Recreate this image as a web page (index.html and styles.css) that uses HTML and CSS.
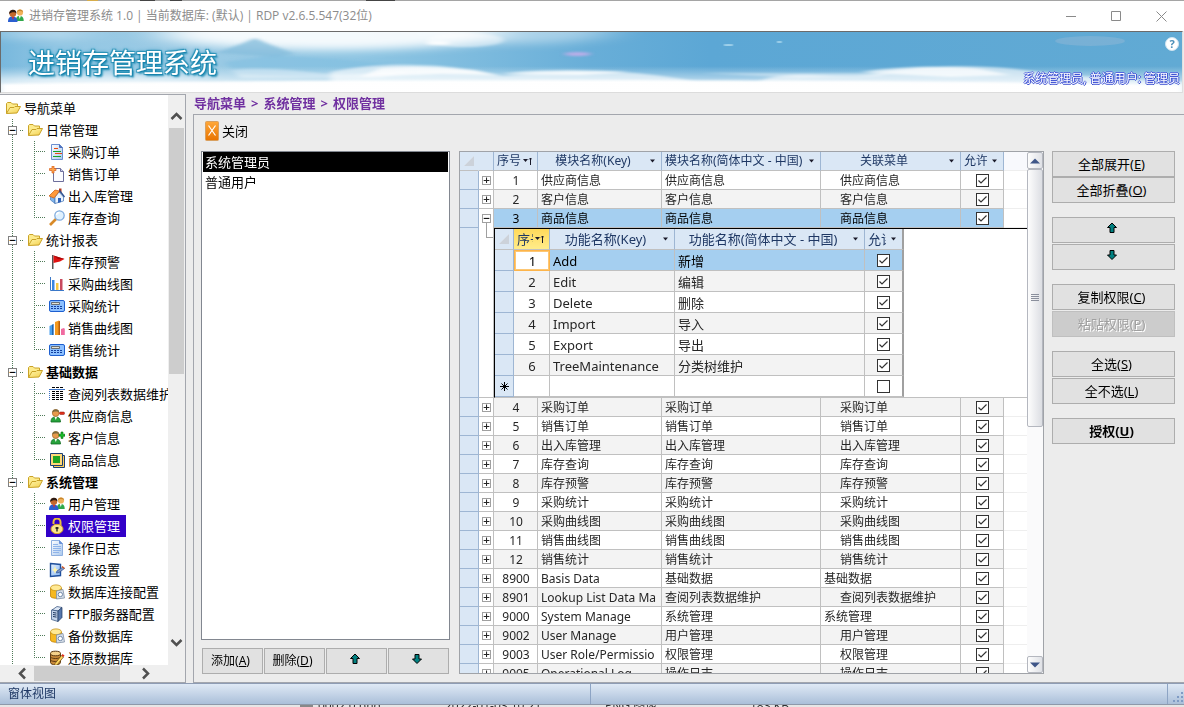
FILE: index.html
```html
<!DOCTYPE html>
<html lang="zh-CN">
<head>
<meta charset="utf-8">
<title>进销存管理系统</title>
<link rel="stylesheet" href="styles.css">
</head>
<body>
<svg class="defs" aria-hidden="true">
  <defs>
    <linearGradient id="gf" x1="0" y1="0" x2="1" y2="1"><stop offset="0" stop-color="#fff7b0"/><stop offset="1" stop-color="#f3cf4a"/></linearGradient>
    <linearGradient id="gb" x1="0" y1="0" x2="1" y2="1"><stop offset="0" stop-color="#e8f3ff"/><stop offset="1" stop-color="#7fb2f5"/></linearGradient>
    <linearGradient id="gd" x1="0" y1="0" x2="1" y2="1"><stop offset="0" stop-color="#ffffff"/><stop offset="1" stop-color="#a9c8ee"/></linearGradient>
    <linearGradient id="go" x1="0" y1="0" x2="0" y2="1"><stop offset="0" stop-color="#ffa83a"/><stop offset="1" stop-color="#e87400"/></linearGradient>
    <symbol id="folder" viewBox="0 0 16 16"><path d="M1.500 13.500V3.500l1-1h3.500l1.500 1.500h5v3" fill="#fdeb8c" stroke="#c9a227"/><path d="M1.500 13.500L5 7.500h4l1-1h5.500L12 13z" fill="url(#gf)" stroke="#c9a227"/></symbol>
    <symbol id="doc" viewBox="0 0 16 16"><path d="M2.500 .5h8l3 3v12h-11z" fill="url(#gd)" stroke="#6b8fd0"/><path d="M10.500 .5v3h3" fill="#5577c0" stroke="#4a6dbb"/><path d="M5 4.500h4M6 9.500h7" stroke="#e84a10"/><path d="M4 7.500h8M4 12.500h8" stroke="#19a02a"/></symbol>
    <symbol id="newdoc" viewBox="0 0 16 16"><path d="M4.500 2.500h7l3 3v10h-10z" fill="#fbfbff" stroke="#6d6f9c"/><path d="M11.500 2.500v3h3" fill="#c8cdea" stroke="#6d6f9c"/><path d="M3 0h2v2.500h2v2H5V7H3V4.500H.5v-2H3z" fill="#ffa64a" stroke="#d9601c" stroke-width=".7"/></symbol>
    <symbol id="house" viewBox="0 0 16 16"><path d="M10 .5h2.500v4H10z" fill="#b53a1e"/><path d="M1.500 7L6 11v4.500L1.500 12z" fill="#7fb4ec" stroke="#3d6fb0" stroke-width=".6"/><path d="M6 9l4-5 4.500 5v4L6 15.500z" fill="#eaf4ff" stroke="#3d6fb0" stroke-width=".7"/><path d="M0 8l6-6 4.500 1L5 10z" fill="#ff9a3c" stroke="#c85a10" stroke-width=".7"/><path d="M10.500 2.500L15.500 9" stroke="#2a4f90" stroke-width="1.300" fill="none"/><path d="M9 10h3v4l-3 1z" fill="#2f62b8"/></symbol>
    <symbol id="mag" viewBox="0 0 16 16"><path d="M1 15l6-6" stroke="#d88a28" stroke-width="2.600"/><circle cx="10.500" cy="5.500" r="4.700" fill="#dff1ff" stroke="#7da9dc" stroke-width="1.200"/><path d="M7.500 5a3 3 0 0 1 3-2.500" stroke="#fff" stroke-width="1.400" fill="none"/></symbol>
    <symbol id="flag" viewBox="0 0 16 16"><path d="M3 1h1.500v14H3z" fill="#555"/><path d="M4.500 1.500L15.500 5 11 7.500 4.500 9z" fill="#e01212"/><path d="M4.500 1.500L15.500 5H9z" fill="#a80808"/></symbol>
    <symbol id="bars" viewBox="0 0 16 16"><path d="M1.500 1v13.500H15" stroke="#3b78c8" fill="none"/><path d="M3 4h3v10H3z" fill="#3a86e0"/><path d="M7 7h3v7H7z" fill="#f5c842"/><path d="M11 3h3v11h-3z" fill="#c84a5e"/><path d="M5 4h1v10H5zM9 7h1v7H9zM13 3h1v11h-1z" fill="#fff" opacity=".5"/></symbol>
    <symbol id="calc" viewBox="0 0 16 16"><rect x=".5" y="2.500" width="15" height="11" rx="1.500" fill="#8cc0ff" stroke="#1d5fd0"/><path d="M2.500 4.500h8v2h-8z" fill="#e4e4d4" stroke="#555" stroke-width=".8"/><path d="M2 8.500h12M2 10.500h12" stroke="#123f9e" stroke-dasharray="2 1"/></symbol>
    <symbol id="chart" viewBox="0 0 16 16"><path d="M.5 6l4-2v11h-4z" fill="#4aa0ee"/><path d="M3 5l1.500-1v11H3z" fill="#2365ad"/><path d="M6 2l4-1.500 1 1V15H6z" fill="#f59a1e"/><path d="M9.500 1.500L11 1v14H9.500z" fill="#b85e0a"/><path d="M12 9l3-1 .8 1v6H12z" fill="#f06aa0"/></symbol>
    <symbol id="list" viewBox="0 0 16 16"><path d="M0 3.500h16" stroke="#3b72c4"/><path d="M3 1.500h3M7 1.500h3M11 1.500h3M3 5.500h3M7 5.500h3M11 5.500h3M3 7.500h3M7 7.500h3M11 7.500h3M3 9.500h3M7 9.500h3M11 9.500h3M3 11.500h3M7 11.500h3M11 11.500h3M3 13.500h3M7 13.500h3M11 13.500h3" stroke="#000"/><path d="M.5 5v9" stroke="#3b72c4" stroke-dasharray="1 1"/></symbol>
    <symbol id="person" viewBox="0 0 16 16"><path d="M2 14c0-4 2-5 4.500-5s5 1 5 5z" fill="#27a23c" stroke="#0d6a20" stroke-width=".8"/><path d="M5.500 9h2.500L6.800 12z" fill="#fff"/><circle cx="6.700" cy="5" r="3.400" fill="#e69a4c" stroke="#a05c1c" stroke-width=".6"/><path d="M3.300 4.500C3 0 10.500 0 10 4.500 9 3 5 3 3.300 4.500z" fill="#7c6a3c"/></symbol>
    <symbol id="uminus" viewBox="0 0 16 16"><use href="#person"/><rect x="10.500" y="4" width="5" height="2.500" rx="1" fill="#e0301a" stroke="#8a1206" stroke-width=".5"/></symbol>
    <symbol id="uplus" viewBox="0 0 16 16"><use href="#person"/><path d="M12 2h2v2.200h2v2h-2v2.200h-2V6.200h-2v-2h2z" fill="#18c02a" stroke="#0b6a14" stroke-width=".6"/></symbol>
    <symbol id="goods" viewBox="0 0 16 16"><path d="M4.500 3.500h11v12h-11z" fill="#ffd05a" stroke="#1c3f74"/><path d="M1.500 1.500h12v12h-12z" fill="#ffd878" stroke="#1c3f74"/><path d="M4 4h7v7H4z" fill="#1fa51f"/></symbol>
    <symbol id="users" viewBox="0 0 16 16"><path d="M8 13c0-4 1-5 3.500-5s4.200 1 4.200 5z" fill="#2fa84a"/><circle cx="12" cy="4.500" r="3.100" fill="#f0b25a"/><path d="M8.900 4C9 .5 15 .5 15.100 4 13 2.500 11 2.500 8.900 4z" fill="#c8862c"/><path d="M10.800 8h2l-1 3z" fill="#fff"/><path d="M0 14c0-4 1.500-5.500 4.500-5.500S9.500 10 9.500 14z" fill="#2b5fd0"/><circle cx="4.800" cy="5.500" r="3.400" fill="#c4682c"/><path d="M1.200 6C.5 1 9 0 8.400 5.500 7 3.500 3 4 1.200 6z" fill="#2c1a12"/><path d="M4 9h2l-1 3z" fill="#e02a2a"/></symbol>
    <symbol id="lock" viewBox="0 0 16 16"><path d="M4.500 6V4a3.500 3.500 0 0 1 7 0v4" fill="none" stroke="#e8bf3c" stroke-width="2"/><ellipse cx="8" cy="11" rx="6" ry="4.700" fill="#fbe58c" stroke="#d8a624"/><path d="M6.500 10h3M8 9v4.500" stroke="#1a1a1a" stroke-width="1.300"/></symbol>
    <symbol id="log" viewBox="0 0 16 16"><path d="M2.500 .5h8l3 3v12h-11z" fill="url(#gd)" stroke="#8fb0e0"/><path d="M10.500 .5v3h3" fill="#6a92d8" stroke="#6a92d8"/><path d="M4 4.500h5M4 6.500h8M4 8.500h8M4 10.500h8M4 12.500h6" stroke="#8fb4ea"/></symbol>
    <symbol id="setup" viewBox="0 0 16 16"><path d="M1.500 1.500l10 1v11l-10 1z" fill="url(#gb)" stroke="#1f4f9c" stroke-width="1.400"/><path d="M6 4l1 3 3 1-3 1-1 3-1-3-2-1 2-1z" fill="#fff3a8"/><path d="M8 9l6-4 1.500 1.500L10 10.500l-2.500.5z" fill="#7d98c8" stroke="#2f4f8c" stroke-width=".7"/><path d="M13 4.500l2.500 2" stroke="#d85a20" stroke-width="1.500"/></symbol>
    <symbol id="db" viewBox="0 0 16 16"><path d="M1.500 4v8c0 3 11 3 11 0V4" fill="#f6b820" stroke="#c08208" stroke-width=".8"/><ellipse cx="7" cy="3.800" rx="5.500" ry="2.900" fill="#ffe994" stroke="#c89414" stroke-width=".8"/><path d="M7.500 7l6.500-1.500 1.500 8.500-8 1z" fill="#d8e0ea" stroke="#8090a6" stroke-width=".8"/><circle cx="11.300" cy="10.500" r="2.200" fill="#fff" stroke="#7088a8"/></symbol>
    <symbol id="server" viewBox="0 0 16 16"><path d="M3 4l5-3.500 5 1L9 5z" fill="#dce6f4" stroke="#2d4a78" stroke-width=".7"/><path d="M2.500 4L9 5v10.500L2.500 13.500z" fill="#c4d4ec" stroke="#2d4a78" stroke-width=".7"/><path d="M9 5l4-3.500v10L9 15.500z" fill="#5677ac" stroke="#1d365e" stroke-width=".7"/><path d="M4 6.500l3.500.6M4 8.500l3.500.6M4 10.500l3.500.6" stroke="#1d365e"/></symbol>
    <symbol id="dbpen" viewBox="0 0 16 16"><path d="M1.500 3.500v9c0 3 10 3 10 0v-9" fill="#c98a3a" stroke="#5c3810"/><ellipse cx="6.500" cy="3.500" rx="5" ry="2.300" fill="#f4d08a" stroke="#5c3810"/><path d="M1.500 7c1 2 9 2 10 0M1.500 10c1 2 9 2 10 0" fill="none" stroke="#5c3810"/><path d="M6 13.500l6.500-8 2 1.500-6.500 8-2.500.5z" fill="#ffd860" stroke="#6b4810" stroke-width=".7"/><path d="M12.500 5.500l2 1.500 1-1.500-2-1.500z" fill="#e02a1a"/></symbol>
    <symbol id="tri" viewBox="0 0 7 4"><path d="M1 .5h5L3.500 3.500z" fill="#1a1a2a"/></symbol>
    <symbol id="sort" viewBox="0 0 9 8"><path d="M0 2h5L2.500 5z" fill="#1a1a2a"/><path d="M7.500 8V1M6 2.500L7.500 1 9 2.500" stroke="#1a1a2a" fill="none"/></symbol>
    <symbol id="corner" viewBox="0 0 12 12"><path d="M11 1v10H1z" fill="#fff" opacity=".8"/><path d="M11 1L1 11h10z" fill="#b9c0ca" opacity=".7"/></symbol>
    <symbol id="up" viewBox="0 0 12 12"><path d="M6 1l4.500 4.500H8V10.500H4V5.500H1.500z" fill="#008080" stroke="#000"/></symbol>
    <symbol id="down" viewBox="0 0 12 12"><path d="M6 10.500L1.500 6H4V1.500h4V6h2.500z" fill="#008080" stroke="#000"/></symbol>
  </defs>
</svg>

<div class="window">
  <div class="desk-top"></div>
  <header class="titlebar">
    <svg class="ico"><use href="#users"/></svg>
    <span class="caption">进销存管理系统 1.0 | 当前数据库: (默认) | RDP v2.6.5.547(32位)</span>
    <div class="winbtns">
      <button aria-label="最小化"><svg width="11" height="11"><path d="M0 5.500h10" stroke="#8a8a8a"/></svg></button>
      <button aria-label="最大化"><svg width="11" height="11"><path d="M.5 .5h9v9h-9z" fill="none" stroke="#8a8a8a"/></svg></button>
      <button aria-label="关闭窗口"><svg width="11" height="11"><path d="M.5 .5l10 10M10.500 .5l-10 10" stroke="#8a8a8a"/></svg></button>
    </div>
  </header>

  <div class="banner">
    <svg class="sky" viewBox="0 0 1182 60" preserveAspectRatio="none" aria-hidden="true">
      <defs>
        <linearGradient id="s1"><stop offset="0" stop-color="#78b8dd"/><stop offset=".05" stop-color="#93c7e4"/><stop offset=".16" stop-color="#9ccbe5"/><stop offset=".3" stop-color="#8fc6e3"/><stop offset=".4" stop-color="#7dbbde"/><stop offset=".5" stop-color="#68aed8"/><stop offset=".6" stop-color="#5ca7d5"/><stop offset="1" stop-color="#61aad4"/></linearGradient>
        <linearGradient id="s2" x1="0" y1="0" x2="0" y2="1"><stop offset="0" stop-color="#fff" stop-opacity="0"/><stop offset=".7" stop-color="#fff" stop-opacity=".9"/><stop offset="1" stop-color="#fff"/></linearGradient>
        <filter id="b1" x="-50%" y="-100%" width="200%" height="300%"><feGaussianBlur stdDeviation="22 4"/></filter>
        <filter id="b2" x="-20%" y="-50%" width="140%" height="200%"><feGaussianBlur stdDeviation="3 1"/></filter>
      </defs>
      <path d="M0 0h1182v60H0z" fill="url(#s1)"/>
      <g filter="url(#b1)" fill="#fff">
        <ellipse cx="330" cy="2" rx="170" ry="16" opacity=".9"/>
        <ellipse cx="40" cy="2" rx="50" ry="5" opacity=".4"/>
        <ellipse cx="520" cy="0" rx="90" ry="12" opacity=".4"/>
        <ellipse cx="90" cy="50" rx="110" ry="5" opacity=".6"/>
      </g>
      <g filter="url(#b2)">
        <ellipse cx="465" cy="8" rx="38" ry="7" fill="#fff" opacity=".45"/>
        <ellipse cx="437" cy="11" rx="12" ry="2" fill="#fff" opacity=".8"/>
        <path d="M215 21L240 12l14-6 14 6 26 10-20 3z" fill="#86bddc" opacity=".8"/>
        <path d="M224 30l50-7 60 4 80 7v10l-90 3-90-5z" fill="#80bde0" opacity=".55"/>
        <path d="M230 38c40-4 70 2 100 4s60-4 80-2l-30 6H240z" fill="#fff" opacity=".35"/>
        <g fill="#fff">
          <path d="M330 40c30-6 60-8 85-7 25 0 40 3 60 5 14 3 20 6 30 6 40-4 80-5 130-3 30 3 60 8 80 11 20 1 30 1 40-1 14-8 40-9 60-8 20 1 50 2 70-3 50-7 90-7 130-3 50 6 100 11 170 13v12H330z" opacity=".6"/>
          <path d="M380 36c30-2 60-1 90 2l30 5-60-1-80 3zM500 42c40-5 90-4 130-2l-50 3z" opacity=".8"/>
          <path d="M860 40c50-7 90-6 120-3l30 6-60 2-60-3z" opacity=".75"/>
          <path d="M700 41h190l-10 3-80 2z" opacity=".4"/>
          <path d="M0 52c200-4 800-6 1182 1v10H0z"/>
        </g>
      </g>
      <ellipse cx="577" cy="22" rx="13" ry="2" fill="#b9aee8" filter="url(#b2)"/>
      <ellipse cx="1090" cy="9" rx="35" ry="5" fill="#9dbbd8" opacity=".4"/>
      <ellipse cx="728" cy="13" rx="5" ry="1" fill="#9fd0ea"/><ellipse cx="779" cy="10" rx="3" ry="1" fill="#9fd0ea"/>
      <path d="M0 34h1182v26H0z" fill="url(#s2)" opacity=".75"/>
    </svg>
    <div class="banner-text">
      <h1>进销存管理系统</h1>
      <div class="account">
        <button class="help" aria-label="帮助">?</button>
        <span class="who">系统管理员, 普通用户: 管理员</span>
      </div>
    </div>
  </div>

  <div class="work">
    <nav class="side" aria-label="导航菜单">
      <div class="side-main">
        <ul class="tree">
          <li class="row root"><svg class="ico"><use href="#folder"/></svg><a href="#">导航菜单</a></li>
          <li class="row group"><button class="box" aria-label="折叠 日常管理">−</button><i class="dash"></i><svg class="ico"><use href="#folder"/></svg><a href="#">日常管理</a></li>
          <li class="row leaf"><i class="branch"></i><a href="#"><svg class="ico"><use href="#doc"/></svg>采购订单</a></li>
          <li class="row leaf"><i class="branch"></i><a href="#"><svg class="ico"><use href="#newdoc"/></svg>销售订单</a></li>
          <li class="row leaf"><i class="branch"></i><a href="#"><svg class="ico"><use href="#house"/></svg>出入库管理</a></li>
          <li class="row leaf last"><i class="branch"></i><a href="#"><svg class="ico"><use href="#mag"/></svg>库存查询</a></li>
          <li class="row group"><button class="box" aria-label="折叠 统计报表">−</button><i class="dash"></i><svg class="ico"><use href="#folder"/></svg><a href="#">统计报表</a></li>
          <li class="row leaf"><i class="branch"></i><a href="#"><svg class="ico"><use href="#flag"/></svg>库存预警</a></li>
          <li class="row leaf"><i class="branch"></i><a href="#"><svg class="ico"><use href="#bars"/></svg>采购曲线图</a></li>
          <li class="row leaf"><i class="branch"></i><a href="#"><svg class="ico"><use href="#calc"/></svg>采购统计</a></li>
          <li class="row leaf"><i class="branch"></i><a href="#"><svg class="ico"><use href="#chart"/></svg>销售曲线图</a></li>
          <li class="row leaf last"><i class="branch"></i><a href="#"><svg class="ico"><use href="#calc"/></svg>销售统计</a></li>
          <li class="row group strong"><button class="box" aria-label="折叠 基础数据">−</button><i class="dash"></i><svg class="ico"><use href="#folder"/></svg><a href="#">基础数据</a></li>
          <li class="row leaf"><i class="branch"></i><a href="#"><svg class="ico"><use href="#list"/></svg>查阅列表数据维护</a></li>
          <li class="row leaf"><i class="branch"></i><a href="#"><svg class="ico"><use href="#uminus"/></svg>供应商信息</a></li>
          <li class="row leaf"><i class="branch"></i><a href="#"><svg class="ico"><use href="#uplus"/></svg>客户信息</a></li>
          <li class="row leaf last"><i class="branch"></i><a href="#"><svg class="ico"><use href="#goods"/></svg>商品信息</a></li>
          <li class="row group strong"><button class="box" aria-label="折叠 系统管理">−</button><i class="dash"></i><svg class="ico"><use href="#folder"/></svg><a href="#">系统管理</a></li>
          <li class="row leaf"><i class="branch"></i><a href="#"><svg class="ico"><use href="#users"/></svg>用户管理</a></li>
          <li class="row leaf"><i class="branch"></i><a href="#" class="current" aria-current="page"><svg class="ico"><use href="#lock"/></svg>权限管理</a></li>
          <li class="row leaf"><i class="branch"></i><a href="#"><svg class="ico"><use href="#log"/></svg>操作日志</a></li>
          <li class="row leaf"><i class="branch"></i><a href="#"><svg class="ico"><use href="#setup"/></svg>系统设置</a></li>
          <li class="row leaf"><i class="branch"></i><a href="#"><svg class="ico"><use href="#db"/></svg>数据库连接配置</a></li>
          <li class="row leaf"><i class="branch"></i><a href="#"><svg class="ico"><use href="#server"/></svg>FTP服务器配置</a></li>
          <li class="row leaf"><i class="branch"></i><a href="#"><svg class="ico"><use href="#db"/></svg>备份数据库</a></li>
          <li class="row leaf last"><i class="branch"></i><a href="#"><svg class="ico"><use href="#dbpen"/></svg>还原数据库</a></li>
        </ul>
        <div class="vbar">
          <svg width="13" height="9"><path d="M1.500 8l5-5 5 5" fill="none" stroke="#505050" stroke-width="2.500"/></svg>
          <div class="vtrack"><div class="vthumb"></div></div>
          <svg width="13" height="9"><path d="M1.500 1l5 5 5-5" fill="none" stroke="#505050" stroke-width="2.500"/></svg>
        </div>
      </div>
      <div class="hbar">
        <svg width="9" height="13"><path d="M8 1.500l-5 5 5 5" fill="none" stroke="#505050" stroke-width="2.500"/></svg>
        <div class="hthumb"></div>
        <svg width="9" height="13"><path d="M1 1.500l5 5-5 5" fill="none" stroke="#505050" stroke-width="2.500"/></svg>
      </div>
    </nav>

    <main class="content">
      <div class="crumbs"><span>导航菜单</span><span>&gt;</span><span>系统管理</span><span>&gt;</span><span>权限管理</span></div>
      <section class="panel">
        <div class="toolbar">
          <button class="close"><svg width="14" height="20"><rect x=".5" y=".5" width="13" height="19" rx="1" fill="url(#go)" stroke="#d8a060"/><path d="M3.500 4.500l7 10M10.500 4.500l-7 10" stroke="#fff" stroke-width="1.200"/></svg>关闭</button>
        </div>
        <div class="cols">
          <div class="roles">
            <ul class="rolelist" role="listbox" aria-label="角色">
              <li role="option" aria-selected="true">系统管理员</li>
              <li role="option" aria-selected="false">普通用户</li>
            </ul>
            <div class="rolebtns">
              <button class="btn">添加(<u>A</u>)</button>
              <button class="btn">删除(<u>D</u>)</button>
              <button class="btn" aria-label="上移角色"><svg class="arr"><use href="#up"/></svg></button>
              <button class="btn" aria-label="下移角色"><svg class="arr"><use href="#down"/></svg></button>
            </div>
          </div>

          <div class="grid">
            <div class="gridview">
              <table class="outer">
                <colgroup><col class="c-sel"><col class="c-exp"><col class="c-no"><col class="c-key"><col class="c-cn"><col class="c-menu"><col class="c-ok"><col></colgroup>
                <thead><tr>
                  <th class="nb"><svg class="corner"><use href="#corner"/></svg></th><th></th>
                  <th><div class="h left"><span>序号</span><svg class="sort"><use href="#sort"/></svg></div></th>
                  <th><div class="h"><span>模块名称(Key)</span><svg class="tri"><use href="#tri"/></svg></div></th>
                  <th><div class="h left"><span>模块名称(简体中文 - 中国)</span><svg class="tri"><use href="#tri"/></svg></div></th>
                  <th><div class="h"><span>关联菜单</span><svg class="tri"><use href="#tri"/></svg></div></th>
                  <th><div class="h left"><span>允许</span><svg class="tri"><use href="#tri"/></svg></div></th>
                  <th class="fill"></th>
                </tr></thead>
                <tbody>
                  <tr><td class="sel"></td><td><button class="box" aria-label="展开 1">+</button></td><td class="no">1</td><td>供应商信息</td><td>供应商信息</td><td class="in">供应商信息</td><td><input type="checkbox" checked aria-label="允许 1"></td><td class="fill"></td></tr>
                  <tr class="alt"><td class="sel"></td><td><button class="box" aria-label="展开 2">+</button></td><td class="no">2</td><td>客户信息</td><td>客户信息</td><td class="in">客户信息</td><td><input type="checkbox" checked aria-label="允许 2"></td><td class="fill"></td></tr>
                  <tr class="hot"><td class="sel"></td><td class="open"><button class="box" aria-label="折叠 3">−</button></td><td class="no">3</td><td>商品信息</td><td>商品信息</td><td class="in">商品信息</td><td><input type="checkbox" checked aria-label="允许 3"></td><td class="fill"></td></tr>
                  <tr class="nest"><td class="sel"></td><td><i class="elbow"></i></td><td colspan="6" class="subcell">
                    <table class="inner">
                      <colgroup><col class="i-sel"><col class="i-no"><col class="i-key"><col class="i-cn"><col class="i-ok"></colgroup>
                      <thead><tr>
                        <th><svg class="corner"><use href="#corner"/></svg></th>
                        <th class="gold"><div class="h left"><span>序号</span><svg class="sort"><use href="#sort"/></svg></div></th>
                        <th><div class="h"><span>功能名称(Key)</span><svg class="tri"><use href="#tri"/></svg></div></th>
                        <th><div class="h"><span>功能名称(简体中文 - 中国)</span><svg class="tri"><use href="#tri"/></svg></div></th>
                        <th><div class="h left"><span>允许</span><svg class="tri"><use href="#tri"/></svg></div></th>
                      </tr></thead>
                      <tbody>
                        <tr class="hot"><td class="sel"></td><td class="no edit">1</td><td>Add</td><td>新增</td><td><input type="checkbox" checked aria-label="允许 Add"></td></tr>
                        <tr class="alt"><td class="sel"></td><td class="no">2</td><td>Edit</td><td>编辑</td><td><input type="checkbox" checked aria-label="允许 Edit"></td></tr>
                        <tr><td class="sel"></td><td class="no">3</td><td>Delete</td><td>删除</td><td><input type="checkbox" checked aria-label="允许 Delete"></td></tr>
                        <tr class="alt"><td class="sel"></td><td class="no">4</td><td>Import</td><td>导入</td><td><input type="checkbox" checked aria-label="允许 Import"></td></tr>
                        <tr><td class="sel"></td><td class="no">5</td><td>Export</td><td>导出</td><td><input type="checkbox" checked aria-label="允许 Export"></td></tr>
                        <tr class="alt"><td class="sel"></td><td class="no">6</td><td>TreeMaintenance</td><td>分类树维护</td><td><input type="checkbox" checked aria-label="允许 TreeMaintenance"></td></tr>
                        <tr><td class="sel"><svg class="star" viewBox="0 0 9 9"><path d="M4.500 0v9M0 4.500h9M1.500 1.500l6 6M7.500 1.500l-6 6" stroke="#000"/></svg></td><td class="no"></td><td></td><td></td><td><input type="checkbox" aria-label="允许 新记录"></td></tr>
                      </tbody>
                    </table>
                  </td></tr>
                  <tr class="alt"><td class="sel"></td><td><button class="box" aria-label="展开 4">+</button></td><td class="no">4</td><td>采购订单</td><td>采购订单</td><td class="in">采购订单</td><td><input type="checkbox" checked aria-label="允许 4"></td><td class="fill"></td></tr>
                  <tr><td class="sel"></td><td><button class="box" aria-label="展开 5">+</button></td><td class="no">5</td><td>销售订单</td><td>销售订单</td><td class="in">销售订单</td><td><input type="checkbox" checked aria-label="允许 5"></td><td class="fill"></td></tr>
                  <tr class="alt"><td class="sel"></td><td><button class="box" aria-label="展开 6">+</button></td><td class="no">6</td><td>出入库管理</td><td>出入库管理</td><td class="in">出入库管理</td><td><input type="checkbox" checked aria-label="允许 6"></td><td class="fill"></td></tr>
                  <tr><td class="sel"></td><td><button class="box" aria-label="展开 7">+</button></td><td class="no">7</td><td>库存查询</td><td>库存查询</td><td class="in">库存查询</td><td><input type="checkbox" checked aria-label="允许 7"></td><td class="fill"></td></tr>
                  <tr class="alt"><td class="sel"></td><td><button class="box" aria-label="展开 8">+</button></td><td class="no">8</td><td>库存预警</td><td>库存预警</td><td class="in">库存预警</td><td><input type="checkbox" checked aria-label="允许 8"></td><td class="fill"></td></tr>
                  <tr><td class="sel"></td><td><button class="box" aria-label="展开 9">+</button></td><td class="no">9</td><td>采购统计</td><td>采购统计</td><td class="in">采购统计</td><td><input type="checkbox" checked aria-label="允许 9"></td><td class="fill"></td></tr>
                  <tr class="alt"><td class="sel"></td><td><button class="box" aria-label="展开 10">+</button></td><td class="no">10</td><td>采购曲线图</td><td>采购曲线图</td><td class="in">采购曲线图</td><td><input type="checkbox" checked aria-label="允许 10"></td><td class="fill"></td></tr>
                  <tr><td class="sel"></td><td><button class="box" aria-label="展开 11">+</button></td><td class="no">11</td><td>销售曲线图</td><td>销售曲线图</td><td class="in">销售曲线图</td><td><input type="checkbox" checked aria-label="允许 11"></td><td class="fill"></td></tr>
                  <tr class="alt"><td class="sel"></td><td><button class="box" aria-label="展开 12">+</button></td><td class="no">12</td><td>销售统计</td><td>销售统计</td><td class="in">销售统计</td><td><input type="checkbox" checked aria-label="允许 12"></td><td class="fill"></td></tr>
                  <tr><td class="sel"></td><td><button class="box" aria-label="展开 8900">+</button></td><td class="no">8900</td><td>Basis Data</td><td>基础数据</td><td>基础数据</td><td><input type="checkbox" checked aria-label="允许 8900"></td><td class="fill"></td></tr>
                  <tr class="alt"><td class="sel"></td><td><button class="box" aria-label="展开 8901">+</button></td><td class="no">8901</td><td>Lookup List Data Ma</td><td>查阅列表数据维护</td><td class="in">查阅列表数据维护</td><td><input type="checkbox" checked aria-label="允许 8901"></td><td class="fill"></td></tr>
                  <tr><td class="sel"></td><td><button class="box" aria-label="展开 9000">+</button></td><td class="no">9000</td><td>System Manage</td><td>系统管理</td><td>系统管理</td><td><input type="checkbox" checked aria-label="允许 9000"></td><td class="fill"></td></tr>
                  <tr class="alt"><td class="sel"></td><td><button class="box" aria-label="展开 9002">+</button></td><td class="no">9002</td><td>User Manage</td><td>用户管理</td><td class="in">用户管理</td><td><input type="checkbox" checked aria-label="允许 9002"></td><td class="fill"></td></tr>
                  <tr><td class="sel"></td><td><button class="box" aria-label="展开 9003">+</button></td><td class="no">9003</td><td>User Role/Permissio</td><td>权限管理</td><td class="in">权限管理</td><td><input type="checkbox" checked aria-label="允许 9003"></td><td class="fill"></td></tr>
                  <tr class="alt"><td class="sel"></td><td><button class="box" aria-label="展开 9005">+</button></td><td class="no">9005</td><td>Operational Log</td><td>操作日志</td><td class="in">操作日志</td><td><input type="checkbox" checked aria-label="允许 9005"></td><td class="fill"></td></tr>
                </tbody>
              </table>
            </div>
            <div class="gbar">
              <button class="gcap" aria-label="向上滚动"><svg width="10" height="6"><path d="M0 5.500h10L5 .5z" fill="#3f5688"/></svg></button>
              <div class="gtrack"><div class="gthumb"><svg width="8" height="8"><path d="M0 .5h8M0 2.500h8M0 4.500h8M0 6.500h8" stroke="#8a8f9c"/></svg></div></div>
              <button class="gcap" aria-label="向下滚动"><svg width="10" height="6"><path d="M0 .5h10L5 5.500z" fill="#3f5688"/></svg></button>
            </div>
          </div>

          <div class="actions">
            <div class="pair tight"><button class="btn">全部展开(<u>E</u>)</button><button class="btn">全部折叠(<u>O</u>)</button></div>
            <div class="pair"><button class="btn" aria-label="上移"><svg class="arr"><use href="#up"/></svg></button><button class="btn" aria-label="下移"><svg class="arr"><use href="#down"/></svg></button></div>
            <div class="pair"><button class="btn">复制权限(<u>C</u>)</button><button class="btn" disabled>粘贴权限(<u>P</u>)</button></div>
            <div class="pair"><button class="btn">全选(<u>S</u>)</button><button class="btn">全不选(<u>L</u>)</button></div>
            <div class="pair"><button class="btn grant">授权(<u>U</u>)</button></div>
          </div>
        </div>
      </section>
    </main>
  </div>

  <footer class="status">
    <span class="pane">窗体视图</span><span class="pane"></span>
    <svg class="grip" width="12" height="12"><path d="M9 0h2v2H9zM5 4h2v2H5zM9 4h2v2H9zM1 8h2v2H1zM5 8h2v2H5zM9 8h2v2H9z" fill="#7f9bc4"/></svg>
  </footer>
  <div class="desk-bottom"><i></i><span class="f1">0002.0.bhd</span><span class="f2">2022-01-03 10:21</span><span class="f3">PNG 图像</span><span class="f4">183 KB</span></div>
</div>
</body>
</html>
```
FILE: styles.css
```css
* { box-sizing: border-box; }

body {
  margin: 0;
  overflow: hidden;
  background: #ececec;
  color: #000;
  font: 13px/18px "Noto Sans", "Noto Sans CJK SC", sans-serif;
}

button { font: inherit; color: inherit; padding: 0; }
ul { list-style: none; margin: 0; padding: 0; }
a { color: inherit; text-decoration: none; }
svg { display: block; flex: none; }
.defs { position: absolute; width: 0; height: 0; }
.ico { width: 16px; height: 16px; }

.window { display: flex; flex-direction: column; height: 100vh; }

/* title bar */
.desk-top {
  flex: none;
  height: 1px;
  background: linear-gradient(90deg, #a5a5a5 0 87px, #d6ad4c 87px 98px, #a5a5a5 98px 140px, #444 140px 155px, #a5a5a5 155px 170px, #444 170px 182px, #a5a5a5 182px 366px, #444 366px 395px, #a5a5a5 395px);
}
.titlebar {
  flex: none;
  display: flex;
  align-items: center;
  height: 30px;
  padding-left: 8px;
  gap: 5px;
  background: #fff;
  color: #8c8c8c;
  font-family: "Open Sans", "Noto Sans CJK SC", sans-serif;
  font-size: 12px;
}
.caption { flex: 1; white-space: nowrap; }
.winbtns { display: flex; }
.winbtns button {
  display: flex;
  align-items: center;
  justify-content: center;
  width: 45px;
  height: 29px;
  border: 0;
  background: none;
}

/* banner */
.banner {
  flex: none;
  display: grid;
  height: 62px;
  margin-right: 1px;
  border: 1px solid #6b6b6b;
  border-right-color: #e0e0e0;
  border-bottom-color: #dcdcdc;
}
.sky, .banner-text { grid-area: 1 / 1; width: 100%; height: 60px; }
.banner-text {
  z-index: 1;
  display: flex;
  justify-content: space-between;
  padding: 4px 2px 4px 27px;
}
.banner h1 {
  margin: 2px 0 0;
  align-self: center;
  color: #fff;
  font-size: 27px;
  font-weight: 400;
  line-height: 40px;
  text-shadow: 1px 1px 1px #1581ab, -1px -1px 1px #2b93b8, 1px -1px 1px #2b93b8, -1px 1px 1px #2b93b8, 2px 2px 2px #2b93b8, 0 0 4px #2b93b8;
}
.account {
  display: flex;
  flex-direction: column;
  justify-content: space-between;
  align-items: flex-end;
}
.help {
  width: 14px;
  height: 14px;
  margin: 1px;
  border: 1px solid #cfe3ef;
  border-radius: 50%;
  background: #fff;
  color: #4b8fb8;
  font-size: 11px;
  font-weight: 700;
  line-height: 12px;
}
.who {
  color: #fff;
  font-size: 12px;
  text-shadow: 1px 0 #3a4cd0, -1px 0 #5566dd, 0 1px #3a4cd0, 0 -1px #5566dd;
}

/* work area */
.work { flex: 1; min-height: 0; display: flex; padding-top: 1px; }

/* navigation tree */
.side {
  flex: none;
  display: flex;
  flex-direction: column;
  width: 186px;
  border: 1px solid #a3a6ad;
  border-left: 0;
  background: #fff;
}
.side-main { flex: 1; min-height: 0; display: flex; }
.tree { flex: 1; min-width: 0; overflow: hidden; padding-top: 2px; }
.row { display: flex; align-items: center; height: 22px; white-space: nowrap; }
.root { padding-left: 5px; gap: 3px; }
.group, .leaf {
  background: repeating-linear-gradient(#4f7a58 0 1px, transparent 1px 2px) 12px 0 / 1px 100% no-repeat;
}
.group { padding-left: 8px; gap: 3px; }
.box {
  flex: none;
  display: flex;
  align-items: center;
  justify-content: center;
  width: 9px;
  height: 9px;
  border: 1px solid #808080;
  background: #fff;
  font: 700 9px/7px "DejaVu Sans", sans-serif;
}
.dash {
  width: 4px;
  height: 1px;
  background: repeating-linear-gradient(90deg, #4f7a58 0 1px, transparent 1px 2px);
}
.branch {
  flex: none;
  width: 12px;
  height: 22px;
  margin-left: 34px;
  background:
    repeating-linear-gradient(#4f7a58 0 1px, transparent 1px 2px) 0 0 / 1px 22px no-repeat,
    repeating-linear-gradient(90deg, #4f7a58 0 1px, transparent 1px 2px) 0 10px / 11px 1px no-repeat;
}
.last .branch {
  background:
    repeating-linear-gradient(#4f7a58 0 1px, transparent 1px 2px) 0 0 / 1px 11px no-repeat,
    repeating-linear-gradient(90deg, #4f7a58 0 1px, transparent 1px 2px) 0 10px / 11px 1px no-repeat;
}
.leaf a {
  display: flex;
  align-items: center;
  gap: 3px;
  height: 22px;
  padding: 0 6px 0 3px;
}
.leaf .current { background: #3200c8; color: #fff; }
.strong { font-weight: 700; }

.vbar {
  flex: none;
  display: flex;
  flex-direction: column;
  align-items: center;
  gap: 8px;
  width: 17px;
  padding: 16px 1px 17px 1px;
  background: #efefef;
}
.vtrack { flex: 1; align-self: stretch; }
.vthumb { height: 49%; background: #cdcdcd; }
.hbar {
  flex: none;
  display: flex;
  align-items: center;
  gap: 8px;
  height: 17px;
  padding: 0 34px 0 17px;
  background: #efefef;
}
.hthumb { flex: none; width: 64%; height: 15px; background: #cdcdcd; }
.hbar svg:last-child { margin-left: auto; }

/* content */
.content { flex: 1; min-width: 0; display: flex; flex-direction: column; margin-left: 7px; }
.crumbs {
  flex: none;
  display: flex;
  gap: 5px;
  height: 20px;
  color: #7030a0;
  font-weight: 700;
  line-height: 19px;
  padding-left: 1px;
}
.panel {
  flex: 1;
  min-height: 0;
  display: flex;
  flex-direction: column;
  padding: 0 9px 8px 7px;
  border: 1px solid #a3a6ad;
  border-right: 0;
}
.toolbar { flex: none; display: flex; align-items: center; height: 36px; padding: 0 4px 4px; }
.close { display: flex; align-items: center; gap: 3px; border: 0; background: none; }
.cols {
  flex: 1;
  min-height: 0;
  display: grid;
  grid-template: minmax(0, 1fr) / 250px minmax(0, 1fr) 123px;
  gap: 8px;
}

.roles { display: flex; flex-direction: column; gap: 8px; margin-right: 1px; }
.rolelist { flex: 1; padding: 0 1px; border: 1px solid #828790; background: #fff; }
.rolelist li { height: 20px; padding-left: 2px; line-height: 20px; }
.rolelist [aria-selected="true"] { background: #000; color: #fff; }
.rolebtns { display: grid; grid-template-columns: repeat(4, 1fr); gap: 1px; padding: 0 1px; }

.btn {
  display: flex;
  align-items: center;
  justify-content: center;
  height: 26px;
  padding: 0 4px 0 0;
  border: 1px solid #adadad;
  background: #e1e1e1;
}
.rolebtns .btn { font-size: 12px; }
.btn:disabled { border-color: #bfbfbf; background: #cccccc; color: #a0a0a0; text-shadow: 1px 1px #fff; }
.btn .arr { width: 12px; height: 12px; margin-bottom: 4px; }
.grant { font-weight: 700; }
.actions { display: flex; flex-direction: column; gap: 14px; }
.pair { display: flex; flex-direction: column; gap: 1px; }
.tight { gap: 0; }

/* data grid */
.grid { display: flex; border: 1px solid #a0a3a8; background: #fff; }
.gridview { flex: 1; min-width: 0; overflow: hidden; }
table { table-layout: fixed; border-collapse: separate; border-spacing: 0; }
.outer { width: 100%; font-size: 12px; }
.c-sel, .i-sel { width: 19px; }
.c-exp { width: 15px; }
.c-no { width: 44px; }
.c-key { width: 124px; }
.c-cn { width: 159px; }
.c-menu { width: 140px; }
.c-ok { width: 43px; }
.i-no { width: 36px; }
.i-key { width: 125px; }
.i-cn { width: 190px; }
.i-ok { width: 39px; }

th, td {
  height: 19px;
  padding: 0;
  border-right: 1px solid #c0c0c0;
  border-bottom: 1px solid #c0c0c0;
  overflow: hidden;
  white-space: nowrap;
  text-align: left;
  line-height: 18px;
  color: #262626;
}
td { padding: 2px 0 0 3px; line-height: 16px; }
th {
  border-right-color: #9eb6d3;
  background: #dae7f5;
  color: #1f3864;
  font-weight: 400;
}
.outer th.nb { border-right-color: #dae7f5; }
.outer th.fill { border-right: 0; border-bottom-color: #eee; background: #f8f9fd; }
.outer td.fill { border-right: 0; border-bottom-color: #eee; background: #fff; }
.outer td.sel, .inner td.sel { padding: 0; border-color: #9eb6d3; background: #dae7f5; }
td.no { padding-left: 1px; text-align: center; }
td.in { padding-left: 19px; }
.alt td { background: #f3f3f3; }
.hot td { background: #a5cff0; color: #000; }
.outer > tbody > tr > td:nth-child(2) { padding: 0 0 0 3px; background: #fff; }
.h { display: flex; align-items: center; height: 18px; padding: 0 5px 0 3px; }
.h span { flex: 1; overflow: hidden; text-align: center; }
.h.left span { text-align: left; }
.tri { width: 7px; height: 4px; margin-left: 4px; }
.sort { width: 9px; height: 8px; margin-left: 2px; }
.corner { width: 12px; height: 12px; margin: auto; }
td .box { border-color: #a0a0a0; }
.outer > tbody > tr > td.open { background: linear-gradient(#a0a0a0, #a0a0a0) 7px 9px / 1px 10px no-repeat, #fff; border-bottom: 0; }

input[type="checkbox"] {
  appearance: none;
  display: block;
  width: 13px;
  height: 13px;
  margin: auto;
  border: 1px solid #333;
  background: #fff;
}
input[type="checkbox"]:checked {
  background: #fff url("data:image/svg+xml,%3Csvg xmlns='http://www.w3.org/2000/svg' viewBox='0 0 11 11'%3E%3Cpath d='M1.500 5.500l2.500 2.500 5.500-5.500' fill='none' stroke='%23333' stroke-width='1.200'/%3E%3C/svg%3E");
}
td:has(> input) { padding: 0; }

.nest > td { vertical-align: top; }
.elbow { display: block; width: 7px; height: 10px; margin-left: 4px; border: solid #a0a0a0; border-width: 0 0 1px 1px; }
.outer td.subcell { padding: 0; border-top: 1px solid #000; border-left: 1px solid #000; border-right: 0; background: #fff; }
.inner { width: 409px; font-size: 13px; }
.inner th { height: 21px; line-height: 20px; }
.inner td { height: 21px; line-height: 18px; }
.inner .h { height: 20px; }
.inner tr > :last-child { border-right: 2px solid #a0a0a0; }
.inner th.gold { background: linear-gradient(#ffd95a, #ffec8a); }
.inner td.edit { padding-top: 0; border: 1px solid #fdb44a; outline: 1px solid #fdc774; outline-offset: -2px; background: #fff; }
.star { width: 9px; height: 9px; margin: auto; }

.gbar { flex: none; display: flex; flex-direction: column; width: 16px; background: #fafafb; }
.gcap {
  display: flex;
  align-items: center;
  justify-content: center;
  height: 17px;
  border: 1px solid #b4b7bf;
  border-radius: 2px;
  background: linear-gradient(90deg, #fdfdfd, #dfe1e6);
}
.gtrack { flex: 1; }
.gthumb {
  display: flex;
  align-items: center;
  justify-content: center;
  height: 53%;
  border: 1px solid #b4b7bf;
  border-radius: 2px;
  background: linear-gradient(90deg, #fdfdfd, #dcdee3);
}

/* status bar */
.status {
  flex: none;
  display: flex;
  align-items: stretch;
  height: 22px;
  border-top: 1px solid #8e9cb4;
  border-bottom: 1px solid #8d99aa;
  background: linear-gradient(#dfe9f5, #aabfd9);
  color: #1f3864;
  font-size: 12px;
  line-height: 19px;
}
.pane { flex: 1; padding-left: 8px; border-right: 1px solid #8da4c4; }
.pane + .pane { flex: 0 1 577px; }
.grip { align-self: flex-end; margin-left: 4px; }

/* slice of the file list behind the window */
.desk-bottom {
  flex: none;
  display: grid;
  grid-template-columns: 300px 18px 127px 160px 145px 1fr;
  height: 2px;
  overflow: hidden;
  background: #e6e6e6;
  color: #333;
  font-size: 12px;
  line-height: 2px;
}
.desk-bottom i { grid-column: 2; width: 13px; background: #888; }
```
